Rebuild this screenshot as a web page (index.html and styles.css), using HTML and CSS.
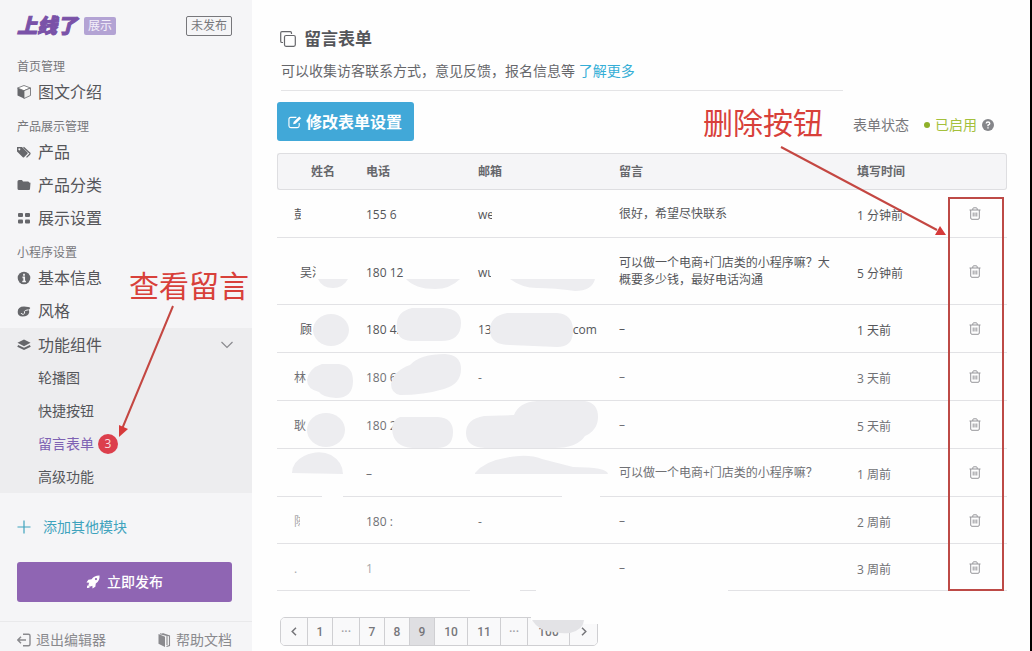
FILE: index.html
```html
<!DOCTYPE html>
<html lang="zh-CN">
<head>
<meta charset="utf-8">
<title>留言表单</title>
<link rel="stylesheet" href="styles.css">
</head>
<body>
<svg class="defs" aria-hidden="true">
  <symbol id="trash" viewBox="0 0 12 13"><path d="M.5 3h11M3.8 3V1.8Q3.8.8 4.800.8h2.400Q8.200.8 8.200 1.800V3M1.700 3v8q0 1.300 1.300 1.300h6q1.300 0 1.300-1.300V3M4.200 5.500v4M6 5.500v4M7.800 5.500v4" fill="none" stroke="currentColor" stroke-width="1"/></symbol>
</svg>
<div class="app">
  <aside class="sidebar">
    <header class="brand">
      <span class="logo">上线了</span><span class="tag">展示</span><span class="state">未发布</span>
    </header>
    <nav class="nav">
      <h2 class="label">首页管理</h2>
      <a class="item" href="#"><svg class="ico" viewBox="0 0 14 14"><path d="M7 .5 13.500 3 7 5.700.5 3z" fill="#fff" stroke="currentColor" stroke-width=".8"/><path d="M.5 3 7 5.700V13.500L.5 10.500z" fill="currentColor"/><path d="M13.500 3 7 5.700V13.500L13.500 10.500z" fill="#eee" stroke="currentColor" stroke-width=".8"/></svg>图文介绍</a>
      <h2 class="label">产品展示管理</h2>
      <a class="item" href="#"><svg class="ico" viewBox="0 0 14 14"><path d="M0 2h5l5.500 5.500q.6.600 0 1.200L7 12.200q-.6.500-1.200 0L0 6.500zM2.300 3.300a1 1 0 1 0 .1 0z" fill="currentColor" fill-rule="evenodd"/><path d="M6.500 2.300 12.700 8q.5.600 0 1.200L9.500 12.400" fill="none" stroke="currentColor" stroke-width="1.300"/></svg>产品</a>
      <a class="item" href="#"><svg class="ico" viewBox="0 0 14 14"><path d="M.5 3.500q0-1.500 1.500-1.500h3l1 1.500h5q1.500 0 1.500 1.500H.5zM.5 4.800h13L13 11q-.1 1-1 1H2q-1.500 0-1.500-1.500z" fill="currentColor"/></svg>产品分类</a>
      <a class="item" href="#"><svg class="ico" viewBox="0 0 14 14"><g fill="currentColor"><rect x="1" y="2" width="5" height="4" rx="1"/><rect x="8" y="2" width="5" height="4" rx="1"/><rect x="1" y="8.500" width="5" height="4" rx="1"/><rect x="8" y="8.500" width="5" height="4" rx="1"/></g></svg>展示设置</a>
      <h2 class="label">小程序设置</h2>
      <a class="item" href="#"><svg class="ico" viewBox="0 0 14 14"><circle cx="7" cy="7" r="6.300" fill="currentColor"/><path d="M7 2.800v2M5.500 6.300H7.200V10.500M5.300 10.500h3.600" fill="none" stroke="#f5f5f7" stroke-width="1.700"/></svg>基本信息</a>
      <a class="item" href="#"><svg class="ico" viewBox="0 0 14 14"><path d="M.7 8Q.7 2.500 7 2.500q5 0 6.300 1.500-.8 1.600-2.300 1.800 1.600.500 1.200 2.700Q11.200 12.500 5.500 12.500.7 12.300.7 8z" fill="currentColor"/><path d="M4 9q.6 1.700 2.500 1.200 2-.8.8-2.700Q8.500 6 11 5.900" fill="none" stroke="#f5f5f7" stroke-width="1"/></svg>风格</a>
      <div class="group">
        <a class="item" href="#"><svg class="ico" viewBox="0 0 14 14"><path d="M7 1.500 13.500 4.800 7 8.200.5 4.800z" fill="currentColor"/><path d="M.7 7.800 7 11l6.300-3.200" fill="none" stroke="currentColor" stroke-width="2"/></svg>功能组件<svg class="chev" viewBox="0 0 14 8"><path d="M1.500 1 7 6.500 12.500 1" fill="none" stroke="currentColor" stroke-width="1.200"/></svg></a>
        <a class="item sub" href="#">轮播图</a>
        <a class="item sub" href="#">快捷按钮</a>
        <a class="item sub active" href="#">留言表单<span class="badge">3</span></a>
        <a class="item sub" href="#">高级功能</a>
      </div>
      <a class="item add" href="#"><svg class="ico" viewBox="0 0 14 14"><path d="M7 .5v13M.5 7h13" stroke="currentColor" stroke-width="1.200"/></svg>添加其他模块</a>
    </nav>
    <button class="publish" type="button"><svg class="ico" viewBox="0 0 15 15"><path d="M14.500.5Q9 .3 6 4.500L2.500 5 .5 8l3 .2Q2.300 10 2.800 11L4 12.200q1 .5 2.800-.7l.2 3 3-2 .5-3.500Q15 6 14.500.5z" fill="currentColor"/><circle cx="10.700" cy="4.300" r="1.200" fill="#8f65b3"/><path d="M1 14q-.2-2.500 1.300-3.200l2 2Q3.500 14.200 1 14z" fill="currentColor"/></svg>立即发布</button>
    <footer class="foot">
      <a href="#"><svg class="ico" viewBox="0 0 14 14"><path d="M6 1.200h5.500q1.500 0 1.500 1.500v8.600q0 1.500-1.500 1.500H6M9 7H1M4 3.700.8 7 4 10.300" fill="none" stroke="currentColor" stroke-width="1.400"/></svg>退出编辑器</a>
      <a href="#"><svg class="ico" viewBox="0 0 14 14"><path d="M1.500 1 8 3.800V14L1.500 10.800z" fill="currentColor"/><path d="M3 .8 10 2.500V12M9.500 13.500l3-1V3L5.500.6" fill="none" stroke="currentColor" stroke-width="1.100"/></svg>帮助文档</a>
    </footer>
  </aside>

  <main class="main">
    <h1 class="title"><svg class="copy" viewBox="0 0 16 16"><rect x="4.500" y="4.500" width="10.800" height="10.800" rx="1.500" fill="none" stroke="currentColor" stroke-width="1.200"/><path d="M3 11.500H2Q.7 11.500.7 10.200V2Q.7.700 2 .7h8.200Q11.500.7 11.500 2V3" fill="none" stroke="currentColor" stroke-width="1.200"/></svg>留言表单</h1>
    <p class="desc">可以收集访客联系方式，意见反馈，报名信息等 <a href="#">了解更多</a></p>
    <div class="bar">
      <button class="edit" type="button"><svg class="ico" viewBox="0 0 15 14"><path d="M9 2H3Q1 2 1 4v7q0 2 2 2h7q2 0 2-2V8" fill="none" stroke="currentColor" stroke-width="1.200"/><path d="M5.500 9.500 6 7l6-6 2.200 2-6.200 6z" fill="currentColor"/></svg>修改表单设置</button>
      <div class="status"><span>表单状态</span><span class="on">已启用</span><svg class="help" viewBox="0 0 12 12"><circle cx="6" cy="6" r="6" fill="currentColor"/><path d="M4.200 4.500Q4.300 3 6 3t1.800 1.500Q7.800 5.400 6 6.200V7.200M6 8.200v1.400" fill="none" stroke="#fff" stroke-width="1.400"/></svg></div>
    </div>
    <table class="grid">
      <colgroup><col class="c-name"><col class="c-phone"><col class="c-mail"><col><col class="c-time"><col class="c-del"></colgroup>
      <thead><tr><th>姓名</th><th>电话</th><th>邮箱</th><th>留言</th><th>填写时间</th><th></th></tr></thead>
      <tbody>
        <tr><td>彭</td><td>155 6</td><td>we</td><td>很好，希望尽快联系</td><td>1 分钟前</td><td><button type="button" aria-label="删除"><svg><use href="#trash"/></svg></button></td></tr>
        <tr class="wide tall"><td>吴洋</td><td>180 12</td><td>wu.</td><td>可以做一个电商+门店类的小程序嘛？大概要多少钱，最好电话沟通</td><td>5 分钟前</td><td><button type="button" aria-label="删除"><svg><use href="#trash"/></svg></button></td></tr>
        <tr class="wide"><td>顾</td><td>180 4.</td><td><span class="mail"><span>13</span><span>com</span></span></td><td>–</td><td>1 天前</td><td><button type="button" aria-label="删除"><svg><use href="#trash"/></svg></button></td></tr>
        <tr class="light"><td>林</td><td>180 6</td><td>-</td><td>–</td><td>3 天前</td><td><button type="button" aria-label="删除"><svg><use href="#trash"/></svg></button></td></tr>
        <tr class="light"><td>耿</td><td>180 2</td><td></td><td>–</td><td>5 天前</td><td><button type="button" aria-label="删除"><svg><use href="#trash"/></svg></button></td></tr>
        <tr class="light"><td></td><td>–</td><td></td><td>可以做一个电商+门店类的小程序嘛？</td><td>1 周前</td><td><button type="button" aria-label="删除"><svg><use href="#trash"/></svg></button></td></tr>
        <tr class="light short"><td class="faint">陈</td><td>180 :</td><td>-</td><td>–</td><td>2 周前</td><td><button type="button" aria-label="删除"><svg><use href="#trash"/></svg></button></td></tr>
        <tr class="light short"><td class="faint">.</td><td class="faint">1</td><td></td><td>–</td><td>3 周前</td><td><button type="button" aria-label="删除"><svg><use href="#trash"/></svg></button></td></tr>
      </tbody>
    </table>
    <nav class="pager" aria-label="分页">
      <button class="mid" type="button" aria-label="上一页"><svg viewBox="0 0 6 9"><path d="M5 .7 1.200 4.500 5 8.300" fill="none" stroke="currentColor" stroke-width="1.500"/></svg></button>
      <button type="button">1</button>
      <button class="mid dots" type="button">···</button>
      <button type="button">7</button>
      <button type="button">8</button>
      <button class="current" type="button">9</button>
      <button class="two" type="button">10</button>
      <button class="two" type="button">11</button>
      <button class="mid dots" type="button">···</button>
      <button class="three" type="button">100</button>
      <button class="mid" type="button" aria-label="下一页"><svg viewBox="0 0 6 9"><path d="M1 .7 4.800 4.500 1 8.300" fill="none" stroke="currentColor" stroke-width="1.500"/></svg></button>
    </nav>
  </main>

  <div class="notes">
    <svg class="marks" viewBox="0 0 1032 651" aria-hidden="true">
      <g fill="#fefefe">
        <path d="M301 206h20v20h-20zM398 206h20v20h-20zM492 206h20v20h-20zM316 262h20v18h-20zM491 262h14v16h-14zM300 512h16v18h-16z"/>
        <path d="M322 494h21v6h-21zM562 494h38v6h-38zM470 587h50v7h-50zM536 587h192v7h-192zM531 614h69v7h-69zM584 620h16v4h-16z"/>
      </g>
      <g fill="#ededf0">
        <path d="M318 279h30q-5 9-15 9-11 0-15-9zM406 279h54q-10 10-25 10-20 0-29-10zM510 279h85q-3 12-20 12-20-3-38-3-15 0-27-9z"/>
        <ellipse cx="331" cy="330" rx="18" ry="16"/>
        <path d="M412 308h31q18 1 18 15 0 18-20 18h-30q-14-1-14-13-2-16 15-20zM507 313h50q16 1 16 18 0 16-16 16l-47-2q-20 0-20-15 0-14 17-17z"/>
        <path d="M322 364h17q14 2 14 17 0 17-17 17-14-1-17-6-12-3-12-12 2-12 15-16zM410 365q10-11 35-11 16 1 16 15 0 15-17 20-20 6-44 6-9-2-9-11 2-13 19-19z"/>
        <ellipse cx="326" cy="430" rx="19" ry="17"/>
        <path d="M400 417h38q15 1 15 15 0 16-16 16h-24q-20-1-21-19 1-10 8-12zM484 416l30-1q5-13 23-14h48q13 2 13 16 0 13-13 19-8 12-30 12H485q-19-1-19-15 0-14 18-17z"/>
        <path d="M292 473q0-11 12-17 15-7 27-1 12 7 12 19zM475 473q10-12 30-15 22-5 37 1l31 8q34 0 35 7H475z"/>
      </g>
      <path d="M532 620h52q-1 10-14 13-9 1-14-1-16 1-24-12z" fill="#e3e3e6"/>
      <rect x="949" y="198" width="54" height="392" fill="none" stroke="#bd4a46" stroke-width="2"/>
      <path d="M173 306 122 429M781 147 937 230" fill="none" stroke="#c44742" stroke-width="2"/>
      <path d="M119 437v-12l9 4zM946 235l-11 0 5-9z" fill="#d63a3a"/>
    </svg>
    <span class="note note-view">查看留言</span>
    <span class="note note-delete">删除按钮</span>
  </div>
</div>
</body>
</html>
```
FILE: styles.css
```css
* { box-sizing: border-box; }
body {
  margin: 0;
  background: #fefefe;
  color: #55565a;
  font: 14px/20px "Open Sans", "Noto Sans CJK SC", sans-serif;
}
a { color: inherit; text-decoration: none; }
h1, h2, p { margin: 0; font-weight: 400; }
button { font: inherit; color: inherit; border: 0; padding: 0; background: none; }
.defs { position: absolute; width: 0; height: 0; }
.app { position: relative; display: flex; min-height: 100vh; border-right: 2px solid #000; }
.ico { width: 14px; height: 14px; flex: none; }

.sidebar { width: 252px; flex: none; background: #f5f5f7; }
.brand { display: flex; align-items: center; height: 24px; margin: 14px 20px 20px 17px; }
.logo { font-size: 20px; font-weight: 900; font-style: italic; color: #7a52a8; -webkit-text-stroke: 1px #7a52a8; }
.tag { margin-left: 7px; padding: 0 4px; font-size: 12px; line-height: 18px; color: #f3effa; background: #b3a3d4; border-radius: 2px; }
.state { margin-left: auto; padding: 0 4px; font-size: 12px; line-height: 18px; border: 1px solid #77777b; border-radius: 2px; color: #77777b; }
.label { margin-top: 9px; padding-left: 17px; font-size: 12px; line-height: 18px; color: #77777b; }
.item { display: flex; align-items: center; gap: 7px; height: 33px; padding: 0 18px 0 17px; font-size: 16px; line-height: 20px; }
.nav > .item:not(.add) { padding-bottom: 1px; }
.item .ico { color: #66676b; }
.group { background: #ededef; }
.item .chev { width: 14px; height: 8px; margin-left: auto; color: #8a8a8e; }
.item.sub { padding-left: 38px; font-size: 14px; gap: 4px; }
.active { color: #7e62b3; }
.badge { width: 20px; height: 20px; border-radius: 10px; background: #dc3f4c; color: #f8dfe1; font-size: 12px; text-align: center; }
.item.add { margin-top: 17px; gap: 12px; font-size: 14px; color: #3fa3bd; }
.add .ico { color: #3fa3bd; }
.publish { display: flex; align-items: center; justify-content: center; gap: 7px; width: 215px; height: 40px; margin: 19px 17px; border-radius: 3px; background: #8f65b3; color: #fff; font-weight: 500; }
.foot { display: flex; justify-content: space-between; padding: 8px 20px 0 17px; border-top: 1px solid #e9e9eb; color: #8a8a8e; }
.foot a { display: flex; align-items: center; gap: 5px; }

.main { flex: 1; min-width: 0; padding: 27px 23px 0 25px; }
.title { display: flex; align-items: center; gap: 8px; padding-left: 3px; font-size: 17px; line-height: 24px; font-weight: 700; }
.copy { width: 16px; height: 16px; color: #66676b; }
.desc { width: 77%; margin: 10px 0 11px 4px; padding-bottom: 9px; border-bottom: 1px solid #e4e4e6; color: #66676b; white-space: nowrap; }
.desc a { color: #35aed6; }
.bar { display: flex; align-items: center; justify-content: space-between; margin-bottom: 12px; }
.edit { display: flex; align-items: center; gap: 4px; height: 39px; padding: 0 12px 0 11px; border-radius: 3px; background: #41a8d8; color: #fff; font-size: 16px; font-weight: 700; }
.status { display: flex; align-items: center; padding: 6px 13px 0 0; color: #77777b; }
.on { margin-left: 15px; color: #a4c03c; }
.on::before { content: ""; display: inline-block; width: 6px; height: 6px; margin-right: 5px; border-radius: 3px; background: #8fb02a; vertical-align: 2px; }
.help { width: 12px; height: 12px; margin-left: 5px; color: #85868a; }

.grid { width: 100%; table-layout: fixed; border-collapse: separate; border-spacing: 0; font-size: 12px; line-height: 17px; }
.c-name { width: 89px; }
.c-phone { width: 112px; }
.c-mail { width: 141px; }
.c-time { width: 90px; }
.c-del { width: 60px; }
.grid th { height: 37px; padding: 0; text-align: left; font-weight: 700; color: #66676b; background: #f5f5f7; border: solid #dedee1; border-width: 1px 0; }
.grid th:first-child { padding-left: 33px; border-left-width: 1px; border-radius: 3px 0 0 3px; }
.grid th:last-child { border-right-width: 1px; border-radius: 0 3px 3px 0; }
.grid td { height: 48px; padding: 2px 0 0; border-bottom: 1px solid #e2e2e5; }
.grid .short td { height: 47px; }
.grid td:first-child { padding-left: 17px; }
.grid .wide td:first-child { padding-left: 23px; }
.grid td:nth-child(4) { padding: 0 24px 0 0; }
.grid .tall td:nth-child(4) { padding: 16px 24px 16px 0; }
.grid td:nth-child(5) { padding-top: 4px; }
.grid td:last-child { padding: 0 4px 0 0; text-align: center; }
.grid td button { display: block; width: 12px; height: 13px; margin: 0 auto; color: #96969a; }
.grid td svg { display: block; width: 12px; height: 13px; }
.light { color: #707175; }
.faint { color: #a8a8ac; }
.mail { display: flex; gap: 81px; }

.pager { display: flex; width: max-content; margin: 26px 0 0 3px; border: 1px solid #cfcfd2; border-radius: 5px; overflow: hidden; font-family: Roboto, sans-serif; font-size: 12px; font-weight: 500; color: #77777b; }
.pager button { display: grid; place-items: center; width: 25px; height: 27px; border-right: 1px solid #cfcfd2; background: #f9f9fa; }
.pager button:last-child { border-right: 0; }
.pager .mid { width: 27px; }
.pager .dots { color: #a0a0a4; }
.pager .two { width: 33px; }
.pager .three { width: 42px; }
.pager .current { background: #dfdfe2; }
.pager svg { width: 6px; height: 9px; }

.notes { position: absolute; top: 0; left: 0; pointer-events: none; }
.marks { display: block; width: 1032px; height: 651px; }
.note { position: absolute; font-size: 30px; line-height: 36px; color: #d8403a; white-space: nowrap; }
.note-view { left: 129px; top: 268px; }
.note-delete { left: 703px; top: 105px; }
```
